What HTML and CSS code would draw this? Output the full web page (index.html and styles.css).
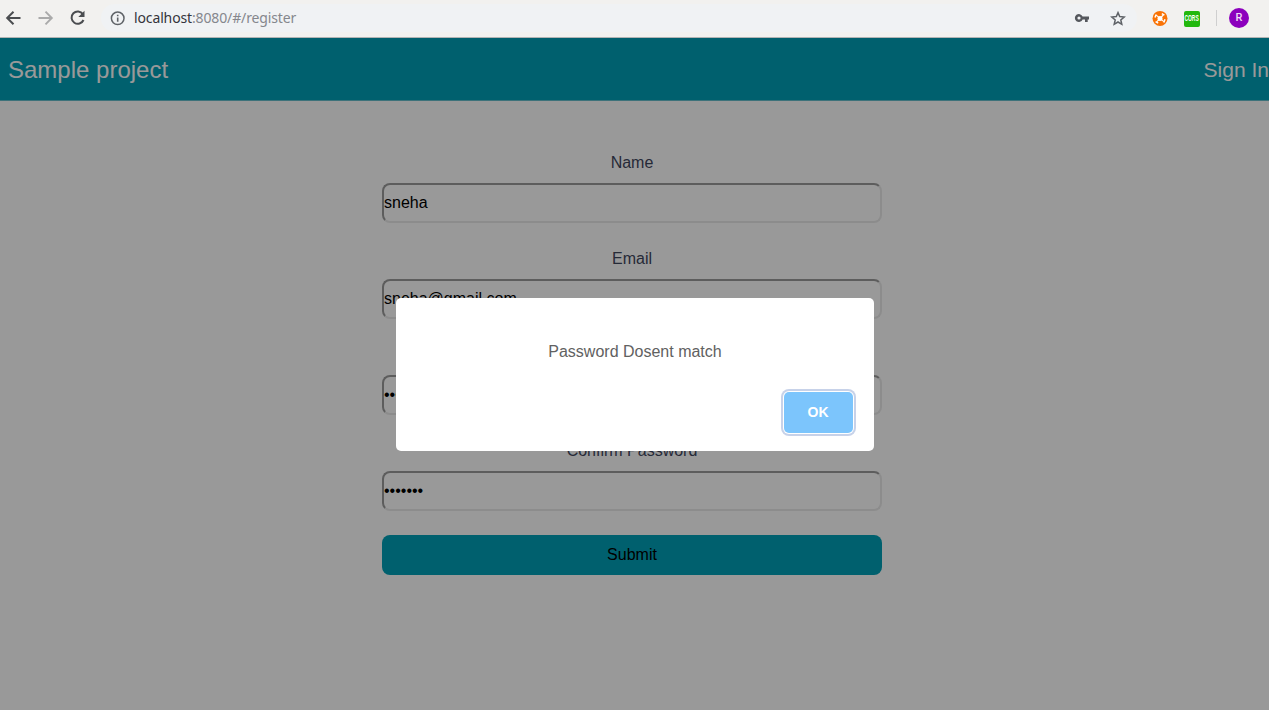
FILE: index.html
```html
<!DOCTYPE html>
<html lang="en">
<head>
<meta charset="utf-8">
<title>Sample project</title>
<link rel="stylesheet" href="styles.css">
</head>
<body>
<div class="browser-bar">
  <div class="nav-icons">
    <svg width="18" height="18" viewBox="0 0 18 18" fill="none" stroke="#4b4d50" stroke-width="2"><path d="M15.500 9H2.500M8.500 2.700 2.200 9 8.500 15.300"/></svg>
    <svg width="18" height="18" viewBox="0 0 18 18" fill="none" stroke="#aaaaaa" stroke-width="1.9"><path d="M1.500 9h13M8.500 2.700 14.800 9 8.500 15.300"/></svg>
    <svg width="18" height="18" viewBox="0 0 18 18"><path d="M13.900 5.100A6.200 6.200 0 1 0 14.500 11" fill="none" stroke="#4b4d50" stroke-width="2"/><path d="M15.500 1.800V8H9.300z" fill="#4b4d50"/></svg>
  </div>
  <div class="address">
    <svg width="16" height="16" viewBox="0 0 16 16"><circle cx="7.700" cy="8.300" r="6.300" fill="none" stroke="#5f6368" stroke-width="1.500"/><path d="M6.900 7.500h1.600v4.200H6.900zM6.900 4.700h1.600v1.600H6.900z" fill="#5f6368"/></svg>
    <span class="url"><span class="host">localhost</span>:8080/#/register</span>
    <svg class="key" width="16" height="16" viewBox="0 0 16 16"><path fill="#55585d" fill-rule="evenodd" d="M8.600 6.600H15v2.800h-1.300V12h-2.700V9.400H8.600A4 4 0 1 1 8.600 6.600zM5 6.400a1.600 1.600 0 1 0 0 3.200 1.600 1.600 0 0 0 0-3.200z"/></svg>
    <svg class="star" width="16" height="16" viewBox="0 0 16 16"><path fill="none" stroke="#5f6368" stroke-width="1.500" d="m8 2.600 1.700 4 4.500.4-3.400 3 1 4.300L8 12l-3.800 2.300 1-4.300-3.400-3 4.500-.4z"/></svg>
  </div>
  <div class="extensions">
    <svg width="16" height="16" viewBox="0 0 16 16"><circle cx="8" cy="8.400" r="7.500" fill="#f97306"/><circle cx="8" cy="8.400" r="2.500" fill="#fff"/><path d="m4.200 5.200 7.600 6.400M11.300 5l-6.600 6.800" stroke="#fff" stroke-width="1.100"/><path d="M3 7.600 4.200 4.400M9.800 3.600l2.600 1.600M13 9.200l-1.200 3.200M6.200 13.200l-2.600-1.600" stroke="#fff" stroke-width="1.500"/></svg>
    <span class="cors"><span class="cors-text">CORS</span></span>
    <span class="divider"></span>
    <span class="avatar">R</span>
  </div>
</div>
<div class="page">
  <header class="site-header"><span class="brand">Sample project</span><span class="sign-in">Sign In</span></header>
  <form class="register">
    <label class="label" for="name">Name</label>
    <input class="field" id="name" value="sneha">
    <label class="label" for="email">Email</label>
    <input class="field" id="email" value="sneha@gmail.com">
    <input class="field field-password" type="password" value="1234567" aria-label="Password">
    <label class="label" for="confirm">Confirm Password</label>
    <input class="field" id="confirm" type="password" value="1234567">
    <button class="submit" type="button">Submit</button>
  </form>
  <div class="overlay">
    <div class="modal">
      <div class="message">Password Dosent match</div>
      <button class="ok" type="button">OK</button>
    </div>
  </div>
</div>
</body>
</html>
```
FILE: styles.css
```css
* { box-sizing: border-box; }
body { margin: 0; height: 710px; overflow: hidden; font-family: "Liberation Sans", Arial, sans-serif; font-size: 16px; }
svg { display: block; flex: none; }
.browser-bar { height: 38px; background: #f2f1ef; border-bottom: 1px solid #b3b4b3; display: flex; align-items: center; padding: 0 0 1px 5px; }
.nav-icons { display: flex; gap: 14px; width: 96px; }
.address { display: flex; align-items: center; width: 1036px; height: 28px; border-radius: 14px; background: #f0f2f4; padding: 0 11px 0 9px; }
.url { font: 14px/20px "Noto Sans", "Open Sans", sans-serif; color: #85878d; margin-left: 8px; white-space: nowrap; letter-spacing: -0.13px; }
.host { color: #34343b; }
.key { margin-left: auto; margin-right: 20px; }
.extensions { display: flex; align-items: center; margin-left: 15px; }
.cors { width: 16px; height: 16px; margin: 1px 0 0 16px; border-radius: 2px; background: #22b80d; display: flex; align-items: center; justify-content: center; }
.cors-text { font: bold 8px/16px "Liberation Sans", sans-serif; color: #fff; transform: scale(0.62, 1.1); }
.divider { width: 1px; height: 16px; margin: 0 12px 0 16px; background: #cfcfcf; }
.avatar { width: 20px; height: 20px; border-radius: 50%; background: #8c00bd; color: #eedcf5; font: 500 11px/20px Roboto, sans-serif; text-align: center; }
.page { position: relative; height: 672px; background: #fff; }
.site-header { height: 63px; background: #00a0b7; color: #fff; border-bottom: 1px solid #66bfcc; display: flex; align-items: center; justify-content: space-between; padding: 1px 0 0 8px; }
.brand { font-size: 24px; }
.sign-in { font-size: 21px; }
.register { display: flex; flex-direction: column; width: 500px; margin-left: 382px; padding-top: 50px; }
.label { height: 32px; line-height: 23px; text-align: center; color: #3f475e; }
.field { height: 40px; margin: 0 0 24px; padding: 0; border: 2px solid; border-color: #9c9c9c #eaeaea #eaeaea #9c9c9c; border-radius: 8px; background: #fff; color: #000; font: 16px "Liberation Sans", Arial, sans-serif; outline: 0; }
.field-password { margin-top: 32px; }
.submit { height: 40px; border: 0; border-radius: 8px; background: #00a0b7; color: #000; font: 16px "Liberation Sans", Arial, sans-serif; }
.overlay { position: absolute; inset: 0; background: rgba(0, 0, 0, 0.4); }
.modal { position: absolute; left: 396px; top: 260px; width: 478px; height: 153px; border-radius: 5px; background: #fff; display: flex; flex-direction: column; align-items: flex-end; }
.message { width: 100%; padding-top: 44px; height: 94px; line-height: 20px; text-align: center; color: #616161; }
.ok { width: 69px; height: 41px; margin-right: 21px; padding: 0 1px 1px 0; border: 0; border-radius: 5px; background: #7cc5fc; box-shadow: 0 0 0 1px #fff, 0 0 0 3px #c7d2e9; color: #fff; font: bold 14px "Liberation Sans", Arial, sans-serif; }
```
